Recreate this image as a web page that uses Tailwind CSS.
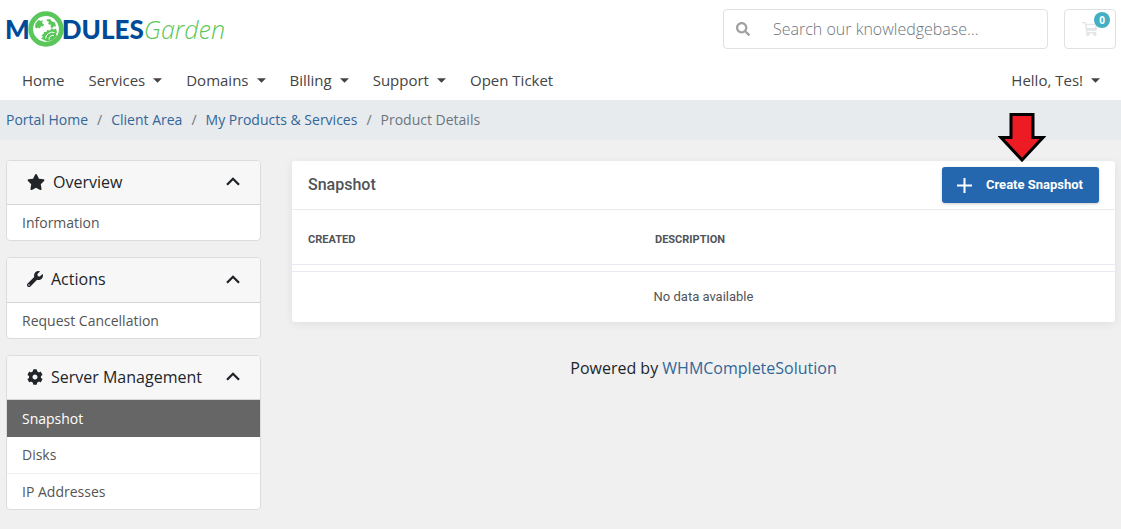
<!DOCTYPE html>
<html lang="en">
<head>
<meta charset="utf-8">
<meta name="viewport" content="width=device-width, initial-scale=1">
<title>Snapshot - ModulesGarden</title>
<script src="https://cdn.jsdelivr.net/npm/@tailwindcss/browser@4"></script>
</head>
<body class="min-h-screen bg-[#f0f0f0] font-['Open_Sans',sans-serif] text-base text-[#212529]">
<svg class="hidden" aria-hidden="true">
  <symbol id="chevron" viewBox="0 0 14 9"><path d="M1 7.800 7 1.800l6 6" fill="none" stroke="currentColor" stroke-width="2.300"/></symbol>
  <symbol id="caret" viewBox="0 0 10 5"><path d="M0 0h10L5 5z" fill="currentColor"/></symbol>
</svg>

<header class="bg-white">
  <div class="flex items-start justify-between pt-[9px] pr-[5px] pl-[5px]">
    <a href="#" aria-label="ModulesGarden" class="flex h-10 items-center">
      <span class="font-['Lato',sans-serif] text-[26px] leading-10 font-black text-[#004b98]">M</span>
      <svg class="-mx-[2px] size-9" viewBox="0 0 36 36" aria-hidden="true">
        <circle cx="18" cy="18" r="15.300" fill="#fff" stroke="#5bc75b" stroke-width="4.800"/>
        <g fill="#5bc75b">
          <path d="M7.500 12.500l3-3.500 2.500 1 2-1-1 3 2 1.500-1 2-2-.5-1 2.500-2-1-1.500 1-1.500-1.500z"/>
          <path d="M18.500 8.500l3.500-.5 2 2.500 3 1 1 4-2.500 0-1.500 2-1.500-1.500.5-2-3-1 1-2-2-1z"/>
          <path d="M13 27.500l2-1.500-1.500-2 2-1 .5-2 2.500 0 .5-2 3 .5 1.500-2 2.500 1 2-1 1 3.500-1 2.500 1 1.500-4 4-6 1.500z"/>
        </g>
        <path d="M17.500 27.500a7 7 0 0 1 9-6M21 28.500a4 4 0 0 1 5-4" fill="none" stroke="#fff" stroke-width="1"/>
      </svg>
      <span class="font-['Lato',sans-serif] text-[26px] leading-10 font-black text-[#004b98]">DULES</span>
      <span class="text-[25px] leading-10 font-light text-[#5bc75b] italic">Garden</span>
    </a>
    <div class="flex gap-4">
      <form class="flex h-10 w-[325px] items-center rounded border border-[#dfe1e3] pl-3" onsubmit="return false">
        <button type="submit" aria-label="Search" class="text-[#a0a0a0]">
          <svg class="size-[14px]" viewBox="0 0 512 512" fill="currentColor"><path d="M505 442.700L405.300 343c-4.500-4.500-10.600-7-17-7H372c27.600-35.300 44-79.700 44-128C416 93.100 322.900 0 208 0S0 93.100 0 208s93.100 208 208 208c48.300 0 92.700-16.400 128-44v16.300c0 6.400 2.500 12.500 7 17l99.700 99.700c9.400 9.400 24.600 9.400 33.900 0l28.300-28.300c9.400-9.400 9.400-24.600.1-34zM208 336c-70.700 0-128-57.200-128-128 0-70.700 57.200-128 128-128 70.700 0 128 57.200 128 128 0 70.700-57.200 128-128 128z"/></svg>
        </button>
        <input type="text" aria-label="Search our knowledgebase" placeholder="Search our knowledgebase..." class="ml-[23px] h-full min-w-0 flex-1 bg-transparent font-light outline-none placeholder:text-[#6c757d]">
      </form>
      <button type="button" aria-label="Shopping cart" class="relative flex h-10 w-[52px] items-center justify-center rounded border border-[#dfe1e3] text-[#e3e5e7]">
        <svg class="h-4 w-[16px]" viewBox="0 0 576 512" fill="currentColor"><path d="M551.991 64H144.280l-8.726-44.608C133.350 8.128 123.478 0 112 0H12C5.373 0 0 5.373 0 12v24c0 6.627 5.373 12 12 12h80.240l69.594 355.701C150.796 415.201 144 430.802 144 448c0 35.346 28.654 64 64 64s64-28.654 64-64a63.681 63.681 0 0 0-8.583-32h145.167a63.681 63.681 0 0 0-8.583 32c0 35.346 28.654 64 64 64 35.346 0 64-28.654 64-64 0-18.136-7.556-34.496-19.676-46.142l1.035-4.757c3.254-14.960-8.142-29.101-23.452-29.101H203.760l-9.390-48h312.405c11.290 0 21.054-7.869 23.452-18.902l45.216-208C578.695 78.139 567.299 64 551.991 64zM464.686 224H184.980l-21.910-112h325.960l-24.344 112z"/></svg>
        <span class="absolute top-[2px] right-[5px] size-4 rounded-full bg-[#42b0c2] text-center text-[10px] leading-4 font-bold text-white">0</span>
      </button>
    </div>
  </div>
  <nav class="flex h-[51px] items-center justify-between pt-[11px] pr-[21px] pl-[22px] text-[15px] text-[#444]">
    <ul class="flex gap-6">
      <li><a href="#">Home</a></li>
      <li><a href="#" class="flex items-center gap-2">Services <svg class="h-[5px] w-[9px]"><use href="#caret"/></svg></a></li>
      <li><a href="#" class="flex items-center gap-2">Domains <svg class="h-[5px] w-[9px]"><use href="#caret"/></svg></a></li>
      <li><a href="#" class="flex items-center gap-2">Billing <svg class="h-[5px] w-[9px]"><use href="#caret"/></svg></a></li>
      <li><a href="#" class="flex items-center gap-2">Support <svg class="h-[5px] w-[9px]"><use href="#caret"/></svg></a></li>
      <li><a href="#">Open Ticket</a></li>
    </ul>
    <a href="#" class="flex items-center gap-2">Hello, Tes! <svg class="h-[5px] w-[9px]"><use href="#caret"/></svg></a>
  </nav>
</header>

<nav aria-label="Breadcrumb" class="bg-[#e7ebee] px-[6px]">
  <ol class="flex h-10 items-center gap-[9px] text-sm text-[#6c757d]">
    <li><a href="#" class="text-[#336699]">Portal Home</a></li><li aria-hidden="true">/</li>
    <li><a href="#" class="text-[#336699]">Client Area</a></li><li aria-hidden="true">/</li>
    <li><a href="#" class="text-[#336699]">My Products &amp; Services</a></li><li aria-hidden="true">/</li>
    <li aria-current="page">Product Details</li>
  </ol>
</nav>

<div class="flex items-start gap-[31px] pt-5 pr-[6px] pb-4 pl-[6px]">
  <aside class="flex w-[255px] shrink-0 flex-col gap-4">
    <section class="overflow-hidden rounded border border-[#dcdcdc] bg-white">
      <h3><button type="button" class="flex h-11 w-full items-center border-b border-[#d6d6d6] bg-[#f7f7f7] px-5 pb-[2px]">
        <svg class="mr-2 h-4 w-[18px]" viewBox="0 0 576 512" fill="currentColor"><path d="M259.300 17.800L194 150.200 47.900 171.500c-26.200 3.800-36.700 36.100-17.700 54.600l105.700 103-25 145.500c-4.500 26.300 23.200 46 46.400 33.700L288 439.600l130.700 68.700c23.200 12.200 50.900-7.400 46.400-33.700l-25-145.500 105.700-103c19-18.500 8.500-50.800-17.700-54.600L382 150.200 316.700 17.800c-11.700-23.600-45.600-23.900-57.400 0z"/></svg>
        Overview<svg class="ml-auto h-[9px] w-[14px]"><use href="#chevron"/></svg></button></h3>
      <a href="#" class="flex h-[35px] items-center px-[15px] text-sm text-[#555]">Information</a>
    </section>
    <section class="overflow-hidden rounded border border-[#dcdcdc] bg-white">
      <h3><button type="button" class="flex h-[45px] w-full items-center border-b border-[#d6d6d6] bg-[#f7f7f7] px-5 pb-[2px]">
        <svg class="mr-2 size-4" viewBox="0 0 512 512" fill="currentColor"><path d="M507.730 109.100c-2.240-9.030-13.540-12.090-20.120-5.510l-74.360 74.360-67.880-11.310-11.310-67.880 74.360-74.360c6.620-6.620 3.430-17.900-5.660-20.160-47.380-11.740-99.550.910-136.580 37.930-39.640 39.640-50.550 97.100-34.050 147.200L18.740 402.760c-24.990 24.990-24.990 65.510 0 90.500 24.990 24.990 65.510 24.990 90.500 0l213.210-213.210c50.120 16.710 107.470 5.680 147.370-34.220 37.070-37.070 49.700-89.320 37.910-136.730zM64 472c-13.250 0-24-10.750-24-24 0-13.260 10.750-24 24-24s24 10.740 24 24c0 13.250-10.750 24-24 24z"/></svg>
        Actions<svg class="ml-auto h-[9px] w-[14px]"><use href="#chevron"/></svg></button></h3>
      <a href="#" class="flex h-[35px] items-center px-[15px] text-sm text-[#555]">Request Cancellation</a>
    </section>
    <section class="overflow-hidden rounded border border-[#dcdcdc] bg-white">
      <h3><button type="button" class="flex h-11 w-full items-center border-b border-[#d6d6d6] bg-[#f7f7f7] px-5 pb-[2px]">
        <svg class="mr-2 size-4" viewBox="0 0 512 512" fill="currentColor"><path d="M487.400 315.700l-42.600-24.600c4.300-23.200 4.300-47 0-70.200l42.600-24.600c4.900-2.800 7.100-8.600 5.500-14-11.100-35.600-30-67.800-54.700-94.600-3.800-4.100-10-5.100-14.800-2.300L380.800 110c-17.900-15.400-38.500-27.300-60.800-35.100V25.800c0-5.600-3.900-10.500-9.400-11.700-36.700-8.200-74.300-7.800-109.200 0-5.500 1.200-9.400 6.100-9.400 11.700V75c-22.200 7.900-42.800 19.800-60.800 35.100L88.700 85.500c-4.900-2.800-11-1.900-14.800 2.300-24.700 26.700-43.600 58.900-54.700 94.600-1.700 5.400.6 11.200 5.500 14L67.300 221c-4.300 23.200-4.300 47 0 70.200l-42.600 24.600c-4.900 2.800-7.100 8.600-5.500 14 11.100 35.600 30 67.800 54.700 94.600 3.800 4.100 10 5.100 14.800 2.300l42.600-24.600c17.900 15.400 38.500 27.300 60.800 35.100v49.200c0 5.600 3.900 10.500 9.400 11.700 36.700 8.200 74.300 7.800 109.200 0 5.500-1.200 9.400-6.100 9.400-11.700v-49.200c22.200-7.900 42.800-19.800 60.800-35.100l42.600 24.600c4.900 2.800 11 1.900 14.800-2.300 24.700-26.700 43.600-58.900 54.700-94.600 1.500-5.500-.7-11.300-5.600-14.100zM256 336c-44.100 0-80-35.900-80-80s35.900-80 80-80 80 35.900 80 80-35.900 80-80 80z"/></svg>
        Server Management<svg class="ml-auto h-[9px] w-[14px]"><use href="#chevron"/></svg></button></h3>
      <a href="#" class="flex h-[37px] items-center bg-[#666] px-[15px] text-sm font-medium text-white">Snapshot</a>
      <a href="#" class="flex h-[37px] items-center border-b border-[#efefef] px-[15px] text-sm text-[#555]">Disks</a>
      <a href="#" class="flex h-[35px] items-center px-[15px] text-sm text-[#555]">IP Addresses</a>
    </section>
  </aside>

  <main class="min-w-0 flex-1 pt-px">
    <section class="rounded-[3px] bg-white font-['Roboto',sans-serif] text-[#505459] shadow-[0_2px_10px_rgba(0,0,0,0.07)]">
      <div class="flex h-[49px] items-center justify-between border-b border-[#e9ebf0] px-4">
        <h2 class="text-base font-medium">Snapshot</h2>
        <div class="relative">
          <button type="button" class="flex h-9 items-center gap-[14px] rounded-[3px] bg-[#2467ae] pr-4 pl-[15px] text-[13px] font-bold text-white shadow-[0_1px_3px_rgba(0,0,0,0.2)]">
            <svg class="size-[15px]" viewBox="0 0 15 15" aria-hidden="true"><path d="M7.500 0v15M0 7.500h15" stroke="#fff" stroke-width="2"/></svg>
            Create Snapshot
          </button>
          <svg class="absolute bottom-[41px] left-14 h-[49px] w-12" viewBox="0 0 48 49" aria-hidden="true"><path d="M13 1.500h22v23h10L24 47 3 24.500h10z" fill="#ed1c24" stroke="#000" stroke-width="3"/></svg>
        </div>
      </div>
      <table class="w-full table-fixed border-collapse text-[13px]">
        <thead>
          <tr class="h-[54px] border-b border-[#e9ebf0] text-left text-[11px]">
            <th scope="col" class="w-[347px] pt-[6px] pl-4 font-bold">CREATED</th>
            <th scope="col" class="pt-[6px] pl-4 font-bold">DESCRIPTION</th>
          </tr>
          <tr class="h-[7px] border-b border-[#e9ebf0]"><td colspan="2"></td></tr>
        </thead>
        <tbody>
          <tr class="h-[51px]"><td colspan="2" class="pb-px text-center">No data available</td></tr>
        </tbody>
      </table>
    </section>
    <footer class="pt-[34px] text-center text-base">Powered by <a href="#" class="text-[#336699]">WHMCompleteSolution</a></footer>
  </main>
</div>
</body>
</html>
